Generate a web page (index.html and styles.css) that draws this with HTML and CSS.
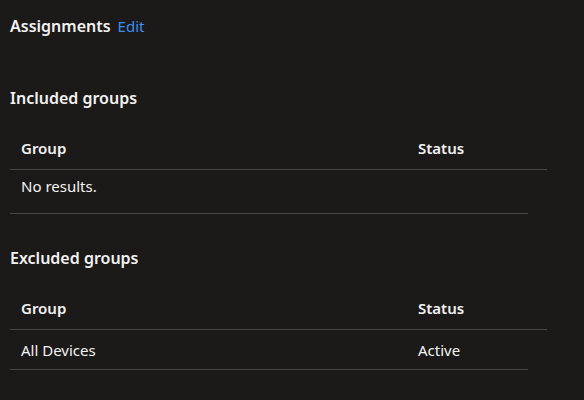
FILE: index.html
```html
<!DOCTYPE html>
<html lang="en">
  <head>
    <meta charset="UTF-8" />
    <meta name="viewport" content="width=device-width, initial-scale=1.0" />
    <title>Assignments</title>
    <link rel="stylesheet" href="styles.css">
  </head>
  <body>
    <div class="panel">
      <div class="title-row">
        <h2>Assignments</h2>
        <a href="#" class="edit-link">Edit</a>
      </div>

      <section class="group-section included">
        <h3>Included groups</h3>
        <div class="grid">
          <div class="grid-head">
            <span class="col-group">Group</span>
            <span class="col-status">Status</span>
          </div>
          <div class="grid-row empty">
            <span class="col-group">No results.</span>
          </div>
        </div>
      </section>

      <section class="group-section excluded">
        <h3>Excluded groups</h3>
        <div class="grid">
          <div class="grid-head">
            <span class="col-group">Group</span>
            <span class="col-status">Status</span>
          </div>
          <div class="grid-row">
            <span class="col-group">All Devices</span>
            <span class="col-status">Active</span>
          </div>
        </div>
      </section>
    </div>
  </body>
</html>
```

FILE: styles.css
```css
body {
  font-family: "Noto Sans", "Open Sans", sans-serif;
  background-color: #1b1a19;
  color: #f3f2f1;
  margin: 0;
  padding: 0;
}
.panel {
  padding: 15px 10px 0 10px;
}
.title-row {
  display: flex;
  align-items: baseline;
  gap: 7px;
  height: 25px;
}
h2 {
  margin: 0;
  font-size: 16px;
  font-weight: 600;
}
h3 {
  margin: 0;
  font-size: 16px;
  font-weight: 600;
  height: 24px;
  line-height: 24px;
}
.edit-link {
  color: #3a8ff0;
  text-decoration: none;
  font-size: 15px;
}
.group-section.included {
  margin-top: 46px;
}
.group-section.excluded {
  margin-top: 32px;
}
.grid {
  margin-top: 17px;
}
.grid-head,
.grid-row {
  display: flex;
  font-size: 15px;
}
.grid-head {
  width: 537px;
  height: 42px;
  align-items: center;
  font-weight: 600;
  border-bottom: 1px solid #484644;
}
.grid-row {
  width: 518px;
  height: 39px;
  align-items: center;
  border-bottom: 1px solid #484644;
}
/* the empty-state row keeps its text near the top */
.grid-row.empty {
  box-sizing: border-box;
  height: 44px;
  align-items: flex-start;
  padding-top: 6px;
}
.col-group {
  width: 387px;
  padding-left: 11px;
}
.col-status {
  padding-left: 10px;
}
```
